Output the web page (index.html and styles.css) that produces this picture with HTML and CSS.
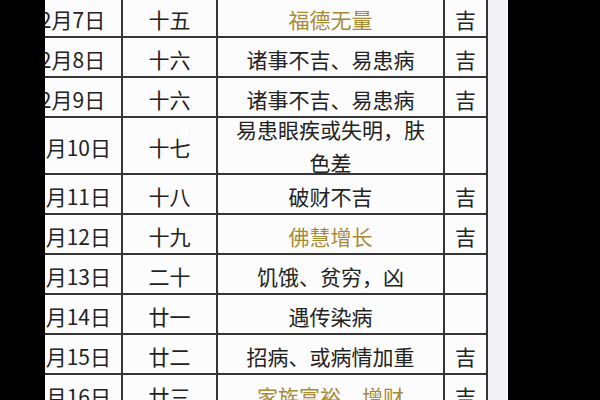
FILE: index.html
```html
<!DOCTYPE html>
<html lang="zh">
<head>
<meta charset="utf-8">
<link rel="stylesheet" href="styles.css">
</head>
<body>
<div class="frame">
  <div class="side side-left"></div>
  <div class="panel">
    <table class="days">
      <colgroup>
        <col class="c-date">
        <col class="c-lunar">
        <col class="c-desc">
        <col class="c-luck">
      </colgroup>
      <tbody>
        <tr><td>2月7日</td><td>十五</td><td class="gold">福德无量</td><td>吉</td></tr>
        <tr><td>2月8日</td><td>十六</td><td>诸事不吉、易患病</td><td>吉</td></tr>
        <tr><td>2月9日</td><td>十六</td><td>诸事不吉、易患病</td><td>吉</td></tr>
        <tr class="tall"><td>2月10日</td><td>十七</td><td class="wrap"><div class="two">易患眼疾或失明，肤色差</div></td><td></td></tr>
        <tr><td>2月11日</td><td>十八</td><td>破财不吉</td><td>吉</td></tr>
        <tr><td>2月12日</td><td>十九</td><td class="gold">佛慧增长</td><td>吉</td></tr>
        <tr><td>2月13日</td><td>二十</td><td>饥饿、贫穷，凶</td><td></td></tr>
        <tr><td>2月14日</td><td>廿一</td><td>遇传染病</td><td></td></tr>
        <tr><td>2月15日</td><td>廿二</td><td>招病、或病情加重</td><td>吉</td></tr>
        <tr><td>2月16日</td><td>廿三</td><td class="gold">家族富裕、增财</td><td>吉</td></tr>
      </tbody>
    </table>
  </div>
  <div class="side side-right"></div>
</div>
</body>
</html>
```

FILE: styles.css
```css
html, body {
  margin: 0;
  padding: 0;
  background: #000;
}

.frame {
  display: flex;
  width: 600px;
  height: 400px;
  overflow: hidden;
  background: #000;
}

.side-left {
  width: 45px;
  flex: none;
}

.side-right {
  flex: 1;
}

.panel {
  width: 463px;
  flex: none;
  height: 400px;
  overflow: hidden;
  background: #f3f3f5;
}

.days {
  margin-left: -23px;
  margin-top: -4px;
  border-collapse: collapse;
  table-layout: fixed;
  width: 466px;
  background: #fcfcfc;
  font-family: "Noto Sans CJK SC", "Noto Sans", sans-serif;
  font-size: 21px;
  color: #222;
}

.c-date { width: 99px; }
.c-lunar { width: 95px; }
.c-desc { width: 227px; }
.c-luck { width: 43px; }

.days td {
  border: 2px solid #353535;
  height: 40px;
  padding: 3px 0 0;
  text-align: center;
  vertical-align: middle;
  line-height: 24px;
  white-space: nowrap;
  box-sizing: border-box;
}

.days td.wrap {
  white-space: normal;
  padding: 0 17px;
}

.two {
  line-height: 33px;
  margin: -8px 0 -8px;
}

.days tr.tall td {
  height: 57px;
}

.gold {
  color: #a88a35;
}
```
